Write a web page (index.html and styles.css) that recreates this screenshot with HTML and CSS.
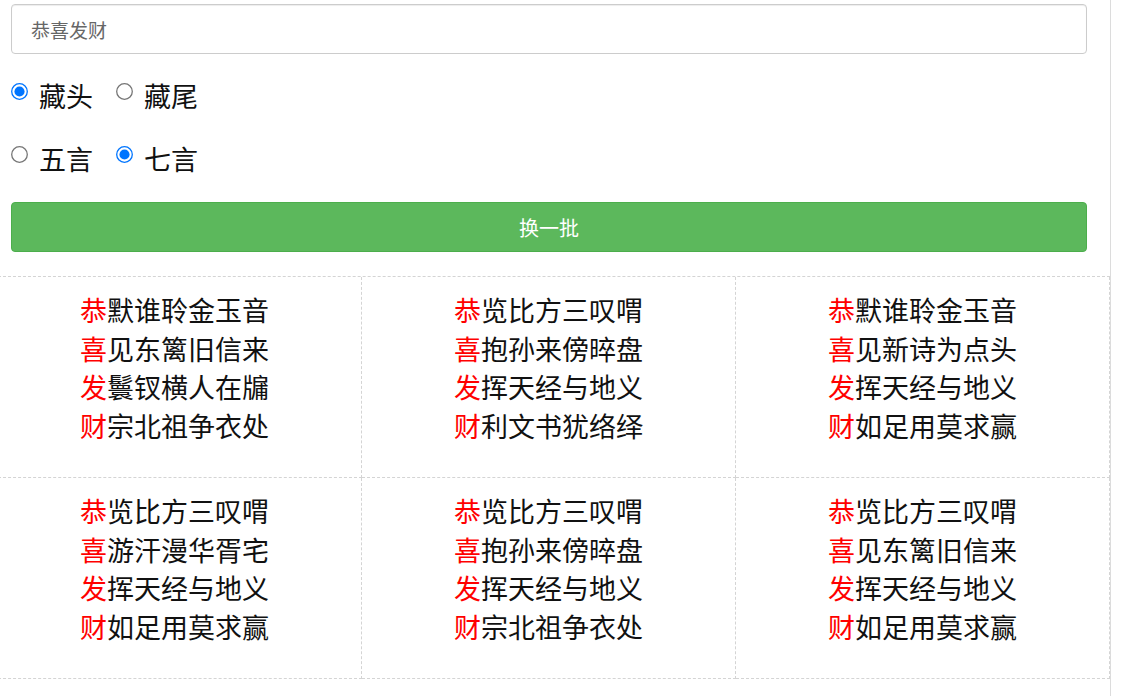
FILE: index.html
```html
<!DOCTYPE html>
<html lang="zh-CN">
<head>
    <meta charset="UTF-8">
    <meta name="viewport" content="width=device-width, initial-scale=1.0">
    <title>藏头诗</title>
    <link rel="stylesheet" href="styles.css">
</head>
<body>
    <div class="page">
        <input type="text" class="keyword-input" placeholder="恭喜发财" />

        <div class="option-row">
            <label class="option"><input type="radio" name="mode" checked /> 藏头</label>
            <label class="option"><input type="radio" name="mode" /> 藏尾</label>
        </div>

        <div class="option-row">
            <label class="option"><input type="radio" name="len" /> 五言</label>
            <label class="option"><input type="radio" name="len" checked /> 七言</label>
        </div>

        <button type="button" class="refresh-btn">换一批</button>

        <div class="poem-grid">
            <div class="poem">
                <p><span class="head">恭</span>默谁聆金玉音</p>
                <p><span class="head">喜</span>见东篱旧信来</p>
                <p><span class="head">发</span>鬟钗横人在牖</p>
                <p><span class="head">财</span>宗北祖争衣处</p>
            </div>
            <div class="poem">
                <p><span class="head">恭</span>览比方三叹喟</p>
                <p><span class="head">喜</span>抱孙来傍晬盘</p>
                <p><span class="head">发</span>挥天经与地义</p>
                <p><span class="head">财</span>利文书犹络绎</p>
            </div>
            <div class="poem">
                <p><span class="head">恭</span>默谁聆金玉音</p>
                <p><span class="head">喜</span>见新诗为点头</p>
                <p><span class="head">发</span>挥天经与地义</p>
                <p><span class="head">财</span>如足用莫求赢</p>
            </div>
            <div class="poem">
                <p><span class="head">恭</span>览比方三叹喟</p>
                <p><span class="head">喜</span>游汗漫华胥宅</p>
                <p><span class="head">发</span>挥天经与地义</p>
                <p><span class="head">财</span>如足用莫求赢</p>
            </div>
            <div class="poem">
                <p><span class="head">恭</span>览比方三叹喟</p>
                <p><span class="head">喜</span>抱孙来傍晬盘</p>
                <p><span class="head">发</span>挥天经与地义</p>
                <p><span class="head">财</span>宗北祖争衣处</p>
            </div>
            <div class="poem">
                <p><span class="head">恭</span>览比方三叹喟</p>
                <p><span class="head">喜</span>见东篱旧信来</p>
                <p><span class="head">发</span>挥天经与地义</p>
                <p><span class="head">财</span>如足用莫求赢</p>
            </div>
        </div>
    </div>
</body>
</html>
```

FILE: styles.css
```css
* {
    box-sizing: border-box;
}

body {
    margin: 0;
    background-color: #fff;
    font-family: "Noto Sans CJK SC", "Noto Sans", sans-serif;
    color: #222;
}

.page {
    width: 1111px;
    min-height: 100vh;
    padding: 4px 23px 0 11px;
    border-right: 1px solid #dcdcdc;
    overflow: hidden;
}

.keyword-input {
    display: block;
    width: 100%;
    height: 50px;
    padding: 0 19px;
    border: 1px solid #ccc;
    border-radius: 4px;
    font-family: inherit;
    font-size: 19px;
    color: #555;
    box-shadow: inset 0 1px 1px rgba(0, 0, 0, 0.075);
}

.keyword-input::placeholder {
    color: #666;
}

.option-row {
    display: flex;
    align-items: center;
    height: 40px;
    margin-top: 21px;
}

.option-row + .option-row {
    margin-top: 23px;
}

.option {
    display: flex;
    align-items: center;
    margin-right: 23px;
    font-size: 27px;
    color: #111;
}

.option input {
    transform: scale(1.3);
    margin: 0 13px 8px 2px;
}

.refresh-btn {
    display: block;
    width: 100%;
    height: 50px;
    margin-top: 24px;
    background-color: #5cb85c;
    border: 1px solid #4cae4c;
    border-radius: 4px;
    color: #fff;
    font-family: inherit;
    font-size: 20px;
    cursor: pointer;
}

.poem-grid {
    display: grid;
    grid-template-columns: repeat(3, 374px);
    margin: 24px -23px 0 -23px;
    border-top: 1px dashed #d4d4d4;
}

.poem {
    height: 201px;
    padding-top: 14px;
    border-right: 1px dashed #d4d4d4;
    border-bottom: 1px dashed #d4d4d4;
    text-align: center;
    font-size: 27px;
    line-height: 38.5px;
    color: #111;
}

.poem p {
    margin: 0;
}

.poem .head {
    color: #f00;
}
```
